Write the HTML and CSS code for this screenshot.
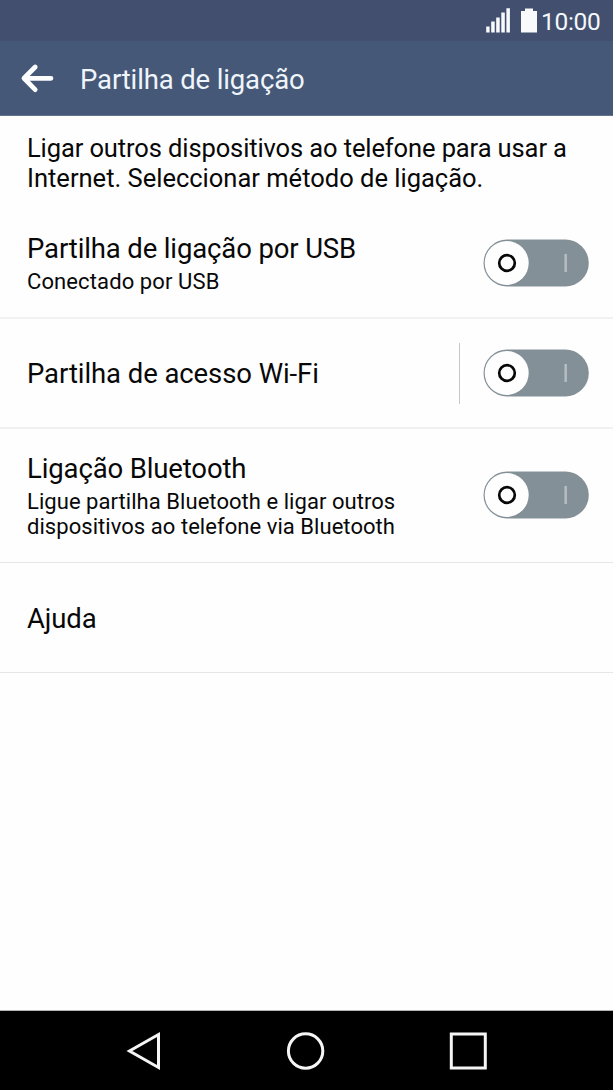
FILE: index.html
```html
<!DOCTYPE html>
<html lang="pt">
<head>
<meta charset="utf-8">
<title>Partilha de ligação</title>
<link rel="stylesheet" href="styles.css">
</head>
<body>
<div class="phone">
  <div class="status-bar">
    <svg class="signal" width="25" height="25" viewBox="0 0 25 25"><path d="M0.200 18.500h3.400v6h-3.400zM5.200 13.500h3.500v11h-3.500zM10.200 9.500h3.500v15h-3.500zM15.300 4.500h3.500v20h-3.500zM20.400 0.300h3.500v24.200h-3.500z"/></svg>
    <svg class="battery" width="16" height="25" viewBox="0 0 16 25"><path d="M4 0.500h8v2.500h4v21.500h-16v-21.500h4z"/></svg>
    <span class="clock">10:00</span>
  </div>
  <header class="app-bar">
    <svg class="back" width="34" height="30" viewBox="0 0 34 30"><path d="M15.200 4L4 15.300L15.200 26.600M4.500 15.300H31"/></svg>
    <h1 class="app-title">Partilha de ligação</h1>
  </header>
  <main class="content">
    <p class="intro"><span class="line intro-first">Ligar outros dispositivos ao telefone para usar a</span><span class="line">Internet. Seleccionar método de ligação.</span></p>
    <section class="row soft">
      <div class="text">
        <h2 class="title">Partilha de ligação por USB</h2>
        <p class="summary usb-summary"><span class="line">Conectado por USB</span></p>
      </div>
      <svg class="toggle" width="106" height="48" viewBox="0 0 106 48"><rect class="track" x="0.500" y="0.500" width="105.300" height="47" rx="23.500"/><circle class="thumb" cx="23.700" cy="24" r="22"/><circle class="off" cx="24" cy="24" r="7.800"/><path class="on" d="M82.700 15v18"/></svg>
    </section>
    <section class="row soft wifi">
      <div class="text">
        <h2 class="title">Partilha de acesso Wi-Fi</h2>
      </div>
      <span class="separator"></span>
      <svg class="toggle" width="106" height="48" viewBox="0 0 106 48"><rect class="track" x="0.500" y="0.500" width="105.300" height="47" rx="23.500"/><circle class="thumb" cx="23.700" cy="24" r="22"/><circle class="off" cx="24" cy="24" r="7.800"/><path class="on" d="M82.700 15v18"/></svg>
    </section>
    <section class="row bluetooth">
      <div class="text">
        <h2 class="title">Ligação Bluetooth</h2>
        <p class="summary"><span class="line">Ligue partilha Bluetooth e ligar outros</span><span class="line">dispositivos ao telefone via Bluetooth</span></p>
      </div>
      <svg class="toggle" width="106" height="48" viewBox="0 0 106 48"><rect class="track" x="0.500" y="0.500" width="105.300" height="47" rx="23.500"/><circle class="thumb" cx="23.700" cy="24" r="22"/><circle class="off" cx="24" cy="24" r="7.800"/><path class="on" d="M82.700 15v18"/></svg>
    </section>
    <section class="row help">
      <div class="text">
        <h2 class="title">Ajuda</h2>
      </div>
    </section>
  </main>
  <nav class="nav-bar">
    <svg class="nav-icon" width="38" height="38" viewBox="0 0 38 38"><path d="M32.500 2.500V35.500L3.500 19z"/></svg>
    <svg class="nav-icon" width="38" height="38" viewBox="0 0 38 38"><circle cx="17.600" cy="19" r="17.200"/></svg>
    <svg class="nav-icon" width="38" height="38" viewBox="0 0 38 38"><path d="M2.300 2h34v34h-34z"/></svg>
  </nav>
</div>
</body>
</html>
```
FILE: styles.css
```css
* { box-sizing: border-box; }
body { margin: 0; font-family: Roboto, "Liberation Sans", sans-serif; color: #080808; background: #fefefe; }
h1, h2, p { margin: 0; font-weight: 400; }
svg { display: block; flex: none; overflow: visible; }
.phone { width: 613px; height: 1090px; display: flex; flex-direction: column; overflow: hidden; }

.status-bar { height: 41px; flex: none; display: flex; align-items: center; justify-content: flex-end; padding-right: 12px; background: #424f6e; color: #f4f8fc; fill: #f8fafc; }
.signal { margin-right: 10px; }
.battery { margin-right: 4px; }
.clock { width: 60px; font-size: 24.5px; letter-spacing: -0.3px; line-height: 30px; white-space: nowrap; padding-top: 2px; }

.app-bar { height: 75px; flex: none; display: flex; align-items: center; padding-left: 20px; background: #465878; border-bottom: 1px solid #62718c; color: #eff5fb; }
.back { fill: none; stroke: #fcfdff; stroke-width: 4.8; stroke-linecap: round; stroke-linejoin: round; }
.app-title { margin-left: 26px; font-size: 27.5px; line-height: 34px; letter-spacing: -0.14px; padding-top: 4px; white-space: nowrap; }

.content { flex: 1; display: flex; flex-direction: column; }
.intro { height: 93px; padding: 17px 27px 0; font-size: 25.5px; line-height: 30px; }
.line { display: block; white-space: nowrap; }
.intro-first { letter-spacing: -0.11px; }
.row { height: 110px; flex: none; display: flex; align-items: center; padding: 0 24px 0 27px; border-bottom: 1px solid #e6e6e6; }
.soft { border-bottom: 2px solid #f1f1f1; }
.wifi .title { padding-top: 2px; letter-spacing: -0.08px; }
.bluetooth { height: 134px; }
.help { padding-top: 2px; }
.text { flex: 1; min-width: 0; }
.title { font-size: 27.5px; line-height: 34px; letter-spacing: -0.13px; white-space: nowrap; }
.summary { font-size: 22px; line-height: 25.5px; letter-spacing: 0.05px; padding-top: 3px; }
.usb-summary { letter-spacing: 0.11px; }
.separator { width: 1px; height: 61px; margin-right: 23px; background: #c8c8c8; }
.toggle { margin-bottom: 1px; }
.track { fill: #839097; }
.thumb { fill: #fefefe; }
.off { fill: none; stroke: #080808; stroke-width: 2.7; }
.on { stroke: #b5bdc1; stroke-width: 2.5; }

.nav-bar { height: 80px; flex: none; display: flex; align-items: center; justify-content: space-between; padding: 0 126px; background: #000; border-top: 1px solid #b0b4b4; }
.nav-icon { fill: none; stroke: #f5f5f5; stroke-width: 3; }
```
